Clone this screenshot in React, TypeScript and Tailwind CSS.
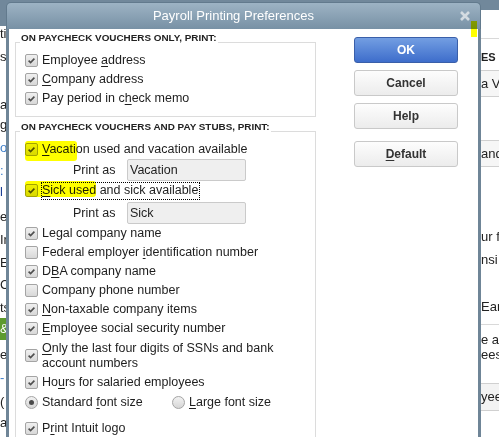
import React from 'react'

function Box({ on = true }: { on?: boolean }) {
  return (
    <span className="flex h-[13px] w-[13px] shrink-0 items-center justify-center rounded-[2px] border border-[#a4a4a4] bg-gradient-to-b from-[#f0f0f0] to-[#d8d8d8]">
      {on && (
        <svg width="9" height="9" viewBox="0 0 9 9">
          <path d="M1.6 4.6 L3.6 6.6 L7.4 2.6" fill="none" stroke="#4f4f4f" strokeWidth="1.6" />
        </svg>
      )}
    </span>
  )
}

function Radio({ on = false }: { on?: boolean }) {
  return (
    <span className="flex h-[13px] w-[13px] shrink-0 items-center justify-center rounded-full border border-[#a4a4a4] bg-gradient-to-b from-[#f2f2f2] to-[#d6d6d6]">
      {on && <span className="h-[5px] w-[5px] rounded-full bg-[#4a4a4a]" />}
    </span>
  )
}

function U({ children }: { children: React.ReactNode }) {
  return <span className="underline decoration-1 underline-offset-[2px]">{children}</span>
}

function Row({ on = true, children }: { on?: boolean; children: React.ReactNode }) {
  return (
    <div className="flex h-[19px] items-center gap-[4px] pl-[9px]">
      <Box on={on} />
      <span className="whitespace-nowrap">{children}</span>
    </div>
  )
}

function Legend({ children }: { children: React.ReactNode }) {
  return (
    <div className="flex h-[10px] items-end">
      <div className="w-[5px] border-b border-[#dcdcdc]" />
      <span className="whitespace-nowrap px-[1px] text-[9.9px] font-bold leading-none text-[#222]">{children}</span>
      <div className="flex-1 border-b border-[#dcdcdc]" />
    </div>
  )
}

function PrintAs({ value }: { value: string }) {
  return (
    <div className="flex h-[22px] items-center pl-[57px]">
      <span className="w-[54px]">Print as</span>
      <div className="flex h-[22px] w-[119px] items-center rounded-[2px] border border-[#cacaca] bg-[#efefef] pl-[2px]">{value}</div>
    </div>
  )
}

function Btn({ children, primary }: { children: React.ReactNode; primary?: boolean }) {
  return (
    <div
      className={
        primary
          ? 'flex h-[26px] items-center justify-center rounded-[3px] border border-[#3a5fa9] bg-gradient-to-b from-[#739ee2] to-[#3e6dcb] text-[12px] font-bold text-white'
          : 'flex h-[26px] items-center justify-center rounded-[3px] border border-[#c9c9c9] bg-gradient-to-b from-[#fdfdfd] to-[#ececec] text-[12px] font-bold text-[#333]'
      }
    >
      {children}
    </div>
  )
}

function LeftBg() {
  return (
    <div className="flex w-[6px] shrink-0 flex-col overflow-hidden text-[13px] leading-[16px] text-[#222]">
      <div className="h-[26px] shrink-0 bg-[#71889b]" />
      <div className="h-[16px] shrink-0 whitespace-nowrap">ti</div>
      <div className="mt-[7px] h-[16px] shrink-0 whitespace-nowrap">s</div>
      <div className="mt-[32px] h-[16px] shrink-0 whitespace-nowrap">ar</div>
      <div className="mt-[4px] h-[16px] shrink-0 whitespace-nowrap">g</div>
      <div className="mt-[7px] h-[16px] shrink-0 whitespace-nowrap text-[#3d7ec9]">o</div>
      <div className="mt-[7px] h-[16px] shrink-0 whitespace-nowrap text-[#3d7ec9]">: (</div>
      <div className="mt-[5px] h-[16px] shrink-0 whitespace-nowrap text-[#1c3f94]">l</div>
      <div className="mt-[9px] h-[16px] shrink-0 whitespace-nowrap">e</div>
      <div className="mt-[7px] h-[16px] shrink-0 whitespace-nowrap">In</div>
      <div className="mt-[7px] h-[16px] shrink-0 whitespace-nowrap">E</div>
      <div className="mt-[6px] h-[16px] shrink-0 whitespace-nowrap">C</div>
      <div className="mt-[7px] h-[16px] shrink-0 whitespace-nowrap">ts</div>
      <div className="mt-[2px] flex h-[22px] shrink-0 items-center whitespace-nowrap bg-[#5c9a2e] text-white">&amp;</div>
      <div className="mt-[7px] h-[16px] shrink-0 whitespace-nowrap">er</div>
      <div className="mt-[7px] h-[16px] shrink-0 whitespace-nowrap text-[#3d7ec9]">- a</div>
      <div className="mt-[8px] h-[16px] shrink-0 whitespace-nowrap">(</div>
      <div className="mt-[5px] h-[16px] shrink-0 whitespace-nowrap">ax</div>
    </div>
  )
}

function RightBg() {
  return (
    <div className="flex min-w-0 flex-1 flex-col overflow-hidden text-[13px] text-[#222]">
      <div className="h-[10px] shrink-0 bg-[#71889b]" />
      <div className="mt-[28px] shrink-0 border-t border-[#d9d9d9]" />
      <div className="mt-[10px] h-[16px] shrink-0 whitespace-nowrap text-[11px] font-bold leading-[16px]">ES F</div>
      <div className="mt-[5px] flex h-[27px] shrink-0 items-center whitespace-nowrap border-y border-[#d0d0d0] bg-[#f6f6f6]">a Vo</div>
      <div className="mt-[43px] flex h-[27px] shrink-0 items-center whitespace-nowrap border-y border-[#d0d0d0] bg-[#f6f6f6]">and</div>
      <div className="mt-[62px] h-[16px] shrink-0 whitespace-nowrap leading-[16px]">ur fi</div>
      <div className="mt-[7px] h-[16px] shrink-0 whitespace-nowrap leading-[16px]">nsi</div>
      <div className="mt-[31px] h-[16px] shrink-0 whitespace-nowrap leading-[16px]">Ear</div>
      <div className="mt-[9px] shrink-0 border-t border-[#d9d9d9]" />
      <div className="mt-[7px] h-[15px] shrink-0 whitespace-nowrap leading-[15px]">e al</div>
      <div className="h-[15px] shrink-0 whitespace-nowrap leading-[15px]">ees</div>
      <div className="mt-[21px] flex h-[28px] shrink-0 items-center whitespace-nowrap border-y border-[#d0d0d0] bg-[#f3f3f3]">yee</div>
    </div>
  )
}

export default function App() {
  return (
    <div className="relative h-[437px] w-[499px] overflow-hidden bg-white font-['Liberation_Sans',Arial,sans-serif] text-[12.5px] text-[#1e1e1e]">
      <div className="flex h-full">
        <LeftBg />
        <div className="flex w-[475px] shrink-0 flex-col bg-[#71889b] pt-[2px]">
          <div className="flex h-[27px] shrink-0 items-center rounded-t-[5px] border border-b-0 border-[#627a8d] bg-gradient-to-b from-[#9db3c4] to-[#7891a5]">
            <span className="flex-1 text-center text-[13px] text-white">Payroll Printing Preferences</span>
            <svg className="mr-[10px]" width="10" height="10" viewBox="0 0 10 10">
              <path d="M1 1 L9 9 M9 1 L1 9" stroke="#d3dbe1" strokeWidth="2.6" />
            </svg>
          </div>
          <div className="flex min-h-0 flex-1 overflow-hidden border-x-[3px] border-[#6f8597] bg-white">
            <div className="ml-[6px] mt-[4px] w-[301px] shrink-0">
              <Legend>ON PAYCHECK VOUCHERS ONLY, PRINT:</Legend>
              <div className="h-[74px] border-x border-b border-[#dcdcdc] pt-[8px]">
                <Row>Employee <U>a</U>ddress</Row>
                <Row><U>C</U>ompany address</Row>
                <Row>Pay period in c<U>h</U>eck memo</Row>
              </div>
              <div className="mt-[5px]">
                <Legend>ON PAYCHECK VOUCHERS AND PAY STUBS, PRINT:</Legend>
              </div>
              <div className="h-[320px] border-x border-[#dcdcdc] pt-[8px]">
                <Row><U>V</U>acation used and vacation available</Row>
                <PrintAs value="Vacation" />
                <div className="flex h-[19px] items-center pl-[9px]">
                  <Box />
                  <span className="ml-[3px] flex h-[18px] items-center whitespace-nowrap border border-dotted border-black pr-[1px]"><U>S</U>ick used and sick available</span>
                </div>
                <div className="mt-[2px]">
                  <PrintAs value="Sick" />
                </div>
                <Row>Legal company name</Row>
                <Row on={false}>Federal employer <U>i</U>dentification number</Row>
                <Row>D<U>B</U>A company name</Row>
                <Row on={false}>Company phone number</Row>
                <Row><U>N</U>on-taxable company items</Row>
                <Row><U>E</U>mployee social security number</Row>
                <div className="flex h-[35px] items-center gap-[4px] pl-[9px]">
                  <Box />
                  <span className="leading-[15px]"><U>O</U>nly the last four digits of SSNs and bank<br />account numbers</span>
                </div>
                <Row>Ho<U>u</U>rs for salaried employees</Row>
                <div className="flex h-[20px] items-center pl-[9px]">
                  <div className="flex w-[147px] items-center gap-[4px]">
                    <Radio on />
                    <span className="whitespace-nowrap">Standard <U>f</U>ont size</span>
                  </div>
                  <div className="flex items-center gap-[4px]">
                    <Radio />
                    <span className="whitespace-nowrap"><U>L</U>arge font size</span>
                  </div>
                </div>
                <div className="mt-[7px]">
                  <Row>P<U>r</U>int Intuit logo</Row>
                </div>
              </div>
            </div>
            <div className="ml-[38px] mt-[8px] flex w-[104px] shrink-0 flex-col">
              <Btn primary>OK</Btn>
              <div className="mt-[7px]"><Btn>Cancel</Btn></div>
              <div className="mt-[7px]"><Btn>Help</Btn></div>
              <div className="mt-[12px]"><Btn><U>D</U>efault</Btn></div>
            </div>
          </div>
        </div>
        <RightBg />
      </div>
      <div className="absolute left-[25px] top-[141px] h-[20px] w-[52px] rounded-[3px] bg-[#ffff00] mix-blend-multiply" />
      <div className="absolute left-[25px] top-[181px] h-[16px] w-[71px] rounded-[3px] bg-[#ffff00] mix-blend-multiply" />
      <div className="absolute left-[471px] top-[21px] h-[16px] w-[6px] bg-[#ffff00] mix-blend-multiply" />
    </div>
  )
}
